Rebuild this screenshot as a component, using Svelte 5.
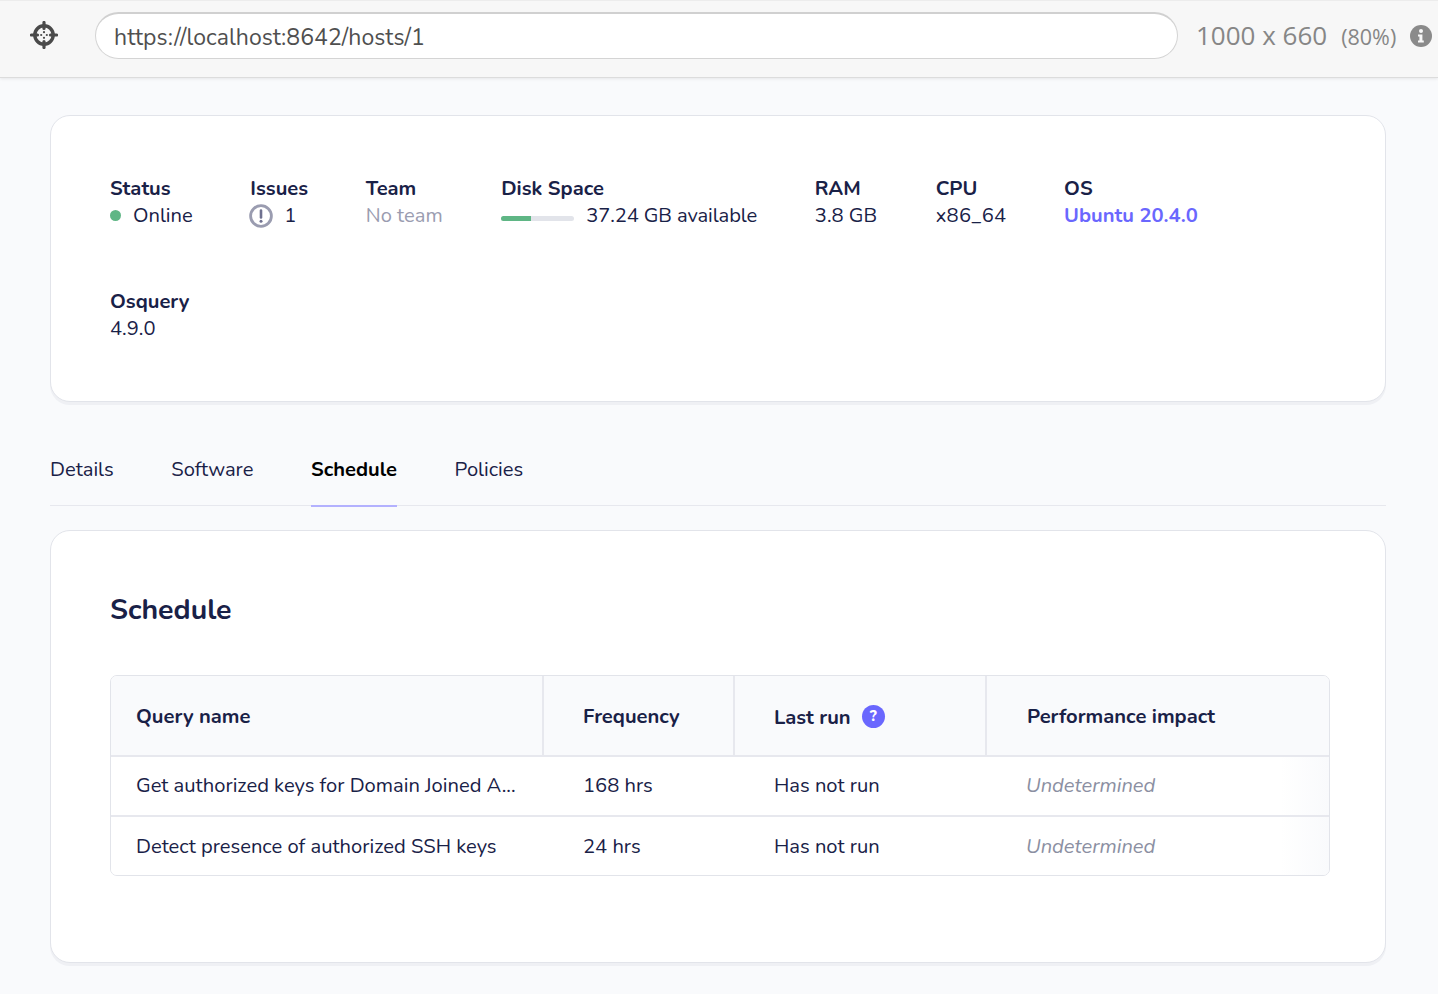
<script>
  const rows = [
    { name: "Get authorized keys for Domain Joined A...", frequency: "168 hrs" },
    { name: "Detect presence of authorized SSH keys", frequency: "24 hrs" },
  ];
</script>

<div class="toolbar">
  <svg class="target" viewBox="0 0 28 28" width="28" height="28" aria-hidden="true">
    <circle cx="14" cy="14" r="9.2" fill="none" stroke="#4a4a4a" stroke-width="3.4" />
    <path d="M14 1.5v6M14 20.5v6M1.5 14h6M20.5 14h6" stroke="#4a4a4a" stroke-width="3.2" stroke-linecap="round" />
    <circle cx="11.2" cy="14" r="1.1" fill="#4a4a4a" />
    <circle cx="16.8" cy="14" r="1.1" fill="#4a4a4a" />
    <circle cx="14" cy="11.2" r="1.1" fill="#4a4a4a" />
    <circle cx="14" cy="16.8" r="1.1" fill="#4a4a4a" />
  </svg>
  <div class="url">https://localhost:8642/hosts/1</div>
  <div class="size">1000 x 660</div>
  <div class="percent">(80%)</div>
  <svg class="info" viewBox="0 0 22 22" width="22" height="22" aria-hidden="true">
    <circle cx="11" cy="11" r="11" fill="#8a8a8a" />
    <circle cx="11" cy="6" r="2" fill="#f7f7f7" />
    <path d="M8 9.4h4.4v6.2h1.4v2H8v-2h1.4v-4.2H8z" fill="#f7f7f7" />
  </svg>
</div>

<main class="page">
  <section class="card summary">
    <div class="vitals">
      <div class="vital">
        <span class="label">Status</span>
        <span class="value"><i class="dot"></i>Online</span>
      </div>
      <div class="vital">
        <span class="label">Issues</span>
        <span class="value">
          <svg class="issue" viewBox="0 0 24 24" width="24" height="24" aria-hidden="true">
            <circle cx="12" cy="12" r="10.4" fill="none" stroke="#9a9cb0" stroke-width="2.8" />
            <path d="M12 6.5v7" stroke="#6f7190" stroke-width="2.6" stroke-linecap="round" />
            <circle cx="12" cy="17.2" r="1.5" fill="#6f7190" />
          </svg>
          1
        </span>
      </div>
      <div class="vital">
        <span class="label">Team</span>
        <span class="value muted">No team</span>
      </div>
      <div class="vital disk-space">
        <span class="label">Disk Space</span>
        <span class="value">
          <span class="disk"><span class="disk-fill" style="width: 41%"></span></span>
          37.24 GB available
        </span>
      </div>
      <div class="vital">
        <span class="label">RAM</span>
        <span class="value">3.8 GB</span>
      </div>
      <div class="vital cpu">
        <span class="label">CPU</span>
        <span class="value">x86_64</span>
      </div>
      <div class="vital">
        <span class="label">OS</span>
        <span class="value link">Ubuntu 20.4.0</span>
      </div>
    </div>
    <div class="vitals">
      <div class="vital">
        <span class="label">Osquery</span>
        <span class="value">4.9.0</span>
      </div>
    </div>
  </section>

  <nav class="tabs">
    <span class="tab">Details</span>
    <span class="tab">Software</span>
    <span class="tab active">Schedule</span>
    <span class="tab">Policies</span>
  </nav>

  <section class="card schedule">
    <h2>Schedule</h2>
    <div class="table">
      <div class="row head">
        <div class="cell">Query name</div>
        <div class="cell">Frequency</div>
        <div class="cell">
          <span class="last-run">Last run</span>
          <span class="help">?</span>
        </div>
        <div class="cell">Performance impact</div>
      </div>
      {#each rows as row}
        <div class="row">
          <div class="cell">{row.name}</div>
          <div class="cell">{row.frequency}</div>
          <div class="cell">Has not run</div>
          <div class="cell undetermined">Undetermined</div>
        </div>
      {/each}
    </div>
  </section>
</main>

<style>
  :global(body) {
    background: #f9fafc;
    color: #192147;
    font-family: "Nunito", "Lato", "Noto Sans", sans-serif;
  }

  .toolbar {
    display: flex;
    align-items: center;
    height: 78px;
    box-sizing: border-box;
    padding: 0 0 8px 30px;
    background: #f7f7f7;
    border-top: 1px solid #ececec;
    border-bottom: 1px solid #dcdcdc;
    box-shadow: 0 1px 3px rgba(0, 0, 0, 0.08);
  }

  .target {
    flex: none;
    margin-right: 37px;
  }

  .url {
    flex: none;
    box-sizing: border-box;
    width: 1083px;
    height: 47px;
    line-height: 47px;
    padding-left: 18px;
    margin-right: 18px;
    background: #fff;
    border: 1px solid #d4d4d4;
    border-top: 2px solid #d0d0d0;
    border-radius: 24px;
    color: #4f4f4f;
    font-size: 23px;
    letter-spacing: 0.07px;
  }

  .size {
    color: #868686;
    font-family: "Open Sans", sans-serif;
    font-size: 26px;
  }

  .percent {
    color: #868686;
    font-family: "Open Sans", sans-serif;
    font-size: 21.5px;
    margin: 2px 14px 0 14px;
  }

  .info {
    flex: none;
    margin-top: 2px;
  }

  .page {
    padding: 37px 52px 30px 50px;
  }

  .card {
    box-sizing: border-box;
    background: #fff;
    border: 1px solid #e2e4ea;
    border-radius: 20px;
    box-shadow: 0 3px 0 rgba(226, 228, 234, 0.45);
  }

  .summary {
    display: flex;
    flex-direction: column;
    gap: 59px;
    height: 287px;
    padding: 59px;
  }

  .vitals {
    display: flex;
    column-gap: 57.6px;
  }

  .vital {
    display: flex;
    flex-direction: column;
    font-size: 20.16px;
    line-height: 27px;
  }

  .disk-space {
    margin-left: 1px;
  }

  .disk-space .value {
    letter-spacing: -0.1px;
  }

  .cpu {
    margin-left: 1px;
  }

  .cpu .value {
    letter-spacing: 0.3px;
  }

  .label {
    font-weight: 700;
  }

  .value {
    display: flex;
    align-items: center;
    white-space: nowrap;
  }

  .muted {
    color: #9a9cb0;
  }

  .link {
    color: #6a67fe;
    font-weight: 700;
  }

  .dot {
    width: 11px;
    height: 11px;
    margin-right: 12px;
    border-radius: 50%;
    background: #5fb685;
  }

  .issue {
    margin-right: 11px;
    margin-left: -1px;
  }

  .disk {
    position: relative;
    width: 73px;
    height: 5px;
    margin: 6px 12px 0 0;
    border-radius: 3px;
    background: #e2e4ea;
    overflow: hidden;
  }

  .disk-fill {
    display: block;
    height: 100%;
    background: #5fb685;
  }

  .tabs {
    display: flex;
    gap: 57.6px;
    height: 76px;
    margin: 28px 0 24px;
    padding-top: 26px;
    box-sizing: border-box;
    border-bottom: 1px solid #e7e8ee;
    font-size: 20.16px;
    line-height: 27px;
  }

  .tab {
    height: 49px;
  }

  .active {
    color: #000;
    font-weight: 700;
    border-bottom: 2px solid #b3b1fe;
  }

  .schedule {
    height: 433px;
    padding: 59px 55px 59px 59px;
  }

  h2 {
    margin: 0 0 45px;
    font-size: 28.5px;
    line-height: 40px;
    font-weight: 700;
  }

  .table {
    border: 1px solid #e2e4ea;
    border-radius: 7px;
    overflow: hidden;
  }

  .row {
    display: grid;
    grid-template-columns: 431px 191px 252px 1fr;
    height: 60px;
    padding-bottom: 1px;
    align-items: center;
    font-size: 20.16px;
    box-sizing: border-box;
    border-bottom: 2px solid #e7e8ee;
    background: linear-gradient(to right, #fff 96%, #f9fafc);
  }

  .row:last-child {
    height: 58px;
    padding-bottom: 0;
    border-bottom: 0;
  }

  .head {
    height: 81px;
    padding-bottom: 0;
    background: #f9fafc;
    font-weight: 700;
  }

  .cell {
    display: flex;
    align-items: center;
    height: 100%;
    padding-left: 25px;
    padding-right: 10px;
    white-space: nowrap;
  }

  .cell + .cell {
    padding-left: 39px;
  }

  .head .cell {
    padding-top: 1px;
    box-sizing: border-box;
  }

  .head .cell:nth-child(4) {
    padding-left: 40px;
  }

  .head .cell + .cell {
    border-left: 2px solid #e7e8ee;
  }

  .row:not(.head) .cell + .cell {
    border-left: 2px solid transparent;
  }

  .undetermined {
    color: #8b8fa2;
    font-style: italic;
  }

  .last-run {
    margin-top: 3px;
  }

  .help {
    display: inline-block;
    width: 23px;
    height: 23px;
    margin-left: 11px;
    border-radius: 50%;
    background: #6a67fe;
    color: #fff;
    font-size: 15px;
    font-weight: 800;
    line-height: 23px;
    text-align: center;
  }
</style>
